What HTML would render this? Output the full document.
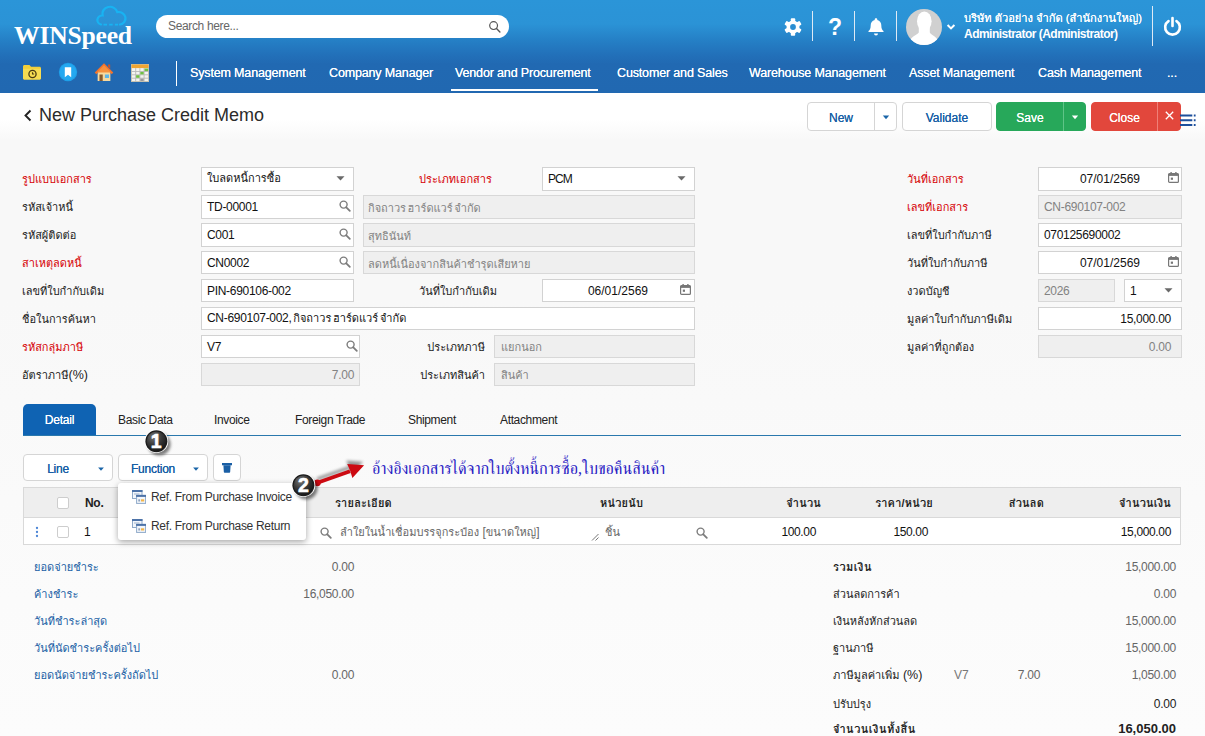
<!DOCTYPE html>
<html lang="th">
<head>
<meta charset="utf-8">
<title>New Purchase Credit Memo</title>
<style>
*{box-sizing:border-box;margin:0;padding:0}
html,body{width:1205px;height:736px;overflow:hidden;background:#fafafa}
body{background:linear-gradient(#f8f8f8 0,#f8f8f8 300px,#fbfbfb 600px,#fcfcfc 736px)}
body{font-family:"Liberation Sans","Loma","Noto Sans Thai Looped","Noto Sans Thai","Garuda","Waree","Sarabun",sans-serif;font-size:12px;color:#222;position:relative}
.abs{position:absolute}
#hdr{position:absolute;left:0;top:0;width:1205px;height:93px;background:linear-gradient(#2b95d8 0px,#2b93d6 24px,#2580c6 40px,#2270b9 55px,#2169b2 64px,#2168b1 93px)}
#logo{position:absolute;left:14px;top:18.5px;font-family:"Liberation Serif",serif;font-weight:bold;font-size:25.6px;color:#fff;letter-spacing:-0.2px;line-height:34px}
#search{position:absolute;left:156px;top:15px;width:353px;height:23px;border-radius:12px;background:#fff;color:#666;font-size:12px;line-height:23px;padding-left:12px;letter-spacing:-0.35px}
.menu{position:absolute;top:65px;color:#fff;font-size:12.5px;line-height:16px;white-space:nowrap;letter-spacing:-0.15px;text-shadow:0 0 0.4px #fff}
.vsep{position:absolute;width:1px;background:#dfeaf5}
.t{position:absolute;white-space:nowrap;line-height:16px}
.lbl{position:absolute;white-space:nowrap;line-height:16px;font-size:12px;color:#1a1a1a}
.red{color:#d60004}
.inp{position:absolute;height:24px;border:1px solid #d2d2d2;background:#fff;font-size:12px;line-height:22px;padding:0 5px;letter-spacing:-0.3px;white-space:nowrap;color:#111;overflow:hidden}
.dis{background:#efefef;color:#828282;border-color:#d8d8d8}
.r{text-align:right}
.th{font-size:11px;letter-spacing:0;word-spacing:-1.3px}
.inp.th{line-height:20px}
.inp.dis.th{line-height:24px;padding-left:4px;word-spacing:-1.5px}
.b{font-weight:bold}
.th.b{letter-spacing:0.2px}
.th.b.tot{letter-spacing:0.5px}
.tab{color:#222;letter-spacing:-0.35px;margin-top:1px}
.btn.tb{height:27px;line-height:28px;letter-spacing:-0.25px}
.dt{padding-right:41px;letter-spacing:0}
.nm{padding-right:10px}
.btn{position:absolute;height:29px;border:1px solid #d5d5d5;border-radius:4px;background:#fff;color:#1a5fa5;font-size:12px;line-height:30px;text-align:center;text-shadow:0 0 0.3px currentColor}
.blue{color:#1a5fa5}
.num{position:absolute;white-space:nowrap;line-height:16px;text-align:right;color:#666}
</style>
</head>
<body>

<div id="hdr">
  <svg class="abs" style="left:93px;top:4px" width="36" height="24" viewBox="0 0 36 26" preserveAspectRatio="none"><path d="M8 22.200A5 5 0 0 1 9.600 12.400 7.500 7.500 0 0 1 24.300 8.800 6.800 6.800 0 0 1 27 22.200" fill="none" stroke="#18b3f2" stroke-width="2.300" stroke-linecap="round"/><path d="M10.500 22.300H25" stroke="#18b3f2" stroke-width="2" stroke-dasharray="3.500 2.200"/></svg>
  <div id="logo">WINSpeed</div>
  <div id="search">Search here...</div>
  <svg class="abs" style="left:488px;top:20px" width="14" height="14" viewBox="0 0 14 14"><circle cx="5.6" cy="5.6" r="3.9" fill="none" stroke="#555" stroke-width="1.2"/><path d="M8.5 8.5l3.4 3.4" stroke="#555" stroke-width="1.4" stroke-linecap="round"/></svg>

  <!-- right icons -->
  <svg class="abs" style="left:784px;top:18px" width="18" height="18" viewBox="0 0 18 18"><g fill="#fff"><circle cx="9" cy="9" r="6.500"/><rect x="6.800" y=".300" width="4.400" height="17.400" rx=".900"/><rect x="6.800" y=".300" width="4.400" height="17.400" rx=".900" transform="rotate(60 9 9)"/><rect x="6.800" y=".300" width="4.400" height="17.400" rx=".900" transform="rotate(120 9 9)"/></g><circle cx="9" cy="9" r="2.900" fill="#2a8ed2"/></svg>
  <div class="vsep" style="left:812px;top:11px;height:30px"></div>
  <div class="abs" style="left:826px;top:13px;width:18px;text-align:center;color:#fff;font-weight:bold;font-size:23px;line-height:28px">?</div>
  <div class="vsep" style="left:854px;top:11px;height:30px"></div>
  <svg class="abs" style="left:867px;top:17px" width="18" height="20" viewBox="0 0 18 20"><path d="M9 1.2c.8 0 1.3.5 1.3 1.2v.5c2.600.7 4 2.700 4 5.300 0 3.400.9 4.800 2.200 5.900v.9H1.500v-.9C2.800 13 3.700 11.600 3.700 8.200c0-2.600 1.400-4.600 4-5.300v-.5c0-.7.500-1.200 1.300-1.200z" fill="#fff"/><path d="M7 16.400h4a2 2 0 0 1-4 0z" fill="#fff"/></svg>
  <div class="vsep" style="left:896px;top:11px;height:30px"></div>
  <svg class="abs" style="left:906px;top:9px" width="36" height="36" viewBox="0 0 36 36"><defs><clipPath id="avc"><circle cx="18" cy="18" r="18"/></clipPath></defs><circle cx="18" cy="18" r="18" fill="#d0d0d0"/><g clip-path="url(#avc)" fill="#fff"><ellipse cx="18.300" cy="12.300" rx="7.300" ry="9.800"/><path d="M12.800 18h11v5.500c1.600 2.600 5.800 3.400 7.800 7.500l1.400 7H3l1.400-7c2-4.100 6.200-4.900 8.400-7.500z"/></g></svg>
  <svg class="abs" style="left:946px;top:22.500px" width="10" height="8" viewBox="0 0 10 8"><path d="M1.600 2l3.400 3.400L8.400 2" fill="none" stroke="#fff" stroke-width="2"/></svg>
  <div class="t" style="left:964px;top:9.5px;color:#fff;font-size:11.1px;text-shadow:0 0 0.5px #fff">บริษัท ตัวอย่าง จำกัด (สำนักงานใหญ่)</div>
  <div class="t" style="left:964px;top:26px;color:#fff;font-size:12px;font-weight:bold;letter-spacing:-0.52px">Administrator (Administrator)</div>
  <div class="vsep" style="left:1152px;top:6px;height:40px"></div>
  <svg class="abs" style="left:1162px;top:16px" width="21" height="21" viewBox="0 0 20 20"><path d="M6.200 4.800a7 7 0 1 0 7.600 0" fill="none" stroke="#fff" stroke-width="2.500" stroke-linecap="round"/><path d="M10 2v7.500" stroke="#fff" stroke-width="2.500" stroke-linecap="round"/></svg>

  <!-- quick icons -->
  <svg class="abs" style="left:22px;top:63px" width="20" height="18" viewBox="0 0 20 18"><path d="M1 3.500c0-.8.600-1.500 1.500-1.500h5l1.500 1.800h8.500c.9 0 1.500.7 1.500 1.500V15c0 .9-.6 1.500-1.500 1.500h-15C1.600 16.500 1 15.900 1 15z" fill="#f3cf3a"/><path d="M1 5.800h18V15c0 .9-.6 1.500-1.500 1.500h-15C1.600 16.500 1 15.900 1 15z" fill="#f7dc52"/><circle cx="10.500" cy="11" r="3.600" fill="#f7dc52" stroke="#4a3b12" stroke-width="1.300"/><path d="M10.500 9.200V11h1.600" fill="none" stroke="#4a3b12" stroke-width="1.100"/></svg>
  <svg class="abs" style="left:58px;top:62px" width="20" height="20" viewBox="0 0 20 20"><circle cx="10" cy="10" r="9.200" fill="#1e9fe8"/><circle cx="10" cy="10" r="8.200" fill="#24a8f0"/><path d="M6.800 5.200h6.400v10l-3.200-2.400-3.200 2.400z" fill="#fff"/></svg>
  <svg class="abs" style="left:94px;top:62px" width="20" height="20" viewBox="0 0 22 20" preserveAspectRatio="none"><path d="M4 9.500h14V19H4z" fill="#f6d9a0"/><path d="M11 1.200L.8 10.600l1.700 1.600L11 4.600l8.500 7.600 1.700-1.600z" fill="#f2722b"/><path d="M11 3.200L3 10.400h16z" fill="#f7913d"/><path d="M6 12.500h3.600V19H6z" fill="#8a5a2b"/><path d="M12 12.500h4.500V16H12z" fill="#5fb6e8"/><path d="M15.500 2.500h2.300v4.200l-2.300-2z" fill="#c9552a"/></svg>
  <svg class="abs" style="left:131px;top:64px" width="18" height="18" viewBox="0 0 18 18"><rect x=".5" y=".5" width="17" height="17" fill="#f4f4f0" stroke="#c9c4b2"/><rect x=".5" y=".5" width="17" height="3.600" fill="#f0a532"/><path d="M.5 7.500h17M.5 10.800h17M.5 14.200h17M4.700 4.100v13.400M8.900 4.100v13.400M13.100 4.100v13.400" stroke="#b9b9b9" stroke-width=".9"/><rect x="9.300" y="7.900" width="3.400" height="2.500" fill="#6fbf44"/><rect x="5.100" y="11.200" width="3.400" height="2.600" fill="#6fbf44"/><rect x="13.500" y="4.500" width="3.600" height="2.600" fill="#6fbf44"/><rect x="9.300" y="14.600" width="3.400" height="2.500" fill="#9a9a9a"/></svg>
  <div class="vsep" style="left:176px;top:61px;height:25px;background:#fff"></div>

  <div class="menu" style="left:190px">System Management</div>
  <div class="menu" style="left:329px">Company Manager</div>
  <div class="menu" style="left:455px">Vendor and Procurement</div>
  <div class="menu" style="left:617px">Customer and Sales</div>
  <div class="menu" style="left:749px">Warehouse Management</div>
  <div class="menu" style="left:909px">Asset Management</div>
  <div class="menu" style="left:1038px">Cash Management</div>
  <div class="menu" style="left:1167px">...</div>
  <div class="abs" style="left:451px;top:89px;width:147px;height:2px;background:#fff"></div>
</div>

<!-- title bar -->
<div class="abs" style="left:0;top:93px;width:1205px;height:47px;background:linear-gradient(#fff 0,#fff 26px,#f8f8f8 47px)"></div>
<svg class="abs" style="left:23px;top:109px" width="10" height="13" viewBox="0 0 10 13"><path d="M7.500 1.500L2.500 6.500l5 5" fill="none" stroke="#222" stroke-width="1.900"/></svg>
<div class="t" style="left:39px;top:103px;font-size:18px;line-height:24px;color:#2b2b2b">New Purchase Credit Memo</div>

<div class="btn" style="left:807px;top:102px;width:90px"><span class="abs" style="left:0;top:0;width:66px">New</span><span class="abs" style="left:66px;top:-1px;width:1px;height:29px;background:#d5d5d5"></span><svg class="abs" style="left:74px;top:12px" width="8" height="5" viewBox="0 0 8 5"><path d="M.8.500h6.400L4 4.300z" fill="#1a65a8"/></svg></div>
<div class="btn" style="left:902px;top:102px;width:90px">Validate</div>
<div class="btn" style="left:996px;top:102px;width:90px;background:#27a85a;border-color:#27a85a;color:#fff"><span class="abs" style="left:0;top:0;width:66px">Save</span><span class="abs" style="left:66px;top:-1px;width:1px;height:29px;background:#5fc487"></span><svg class="abs" style="left:74px;top:12px" width="8" height="5" viewBox="0 0 8 5"><path d="M.8.500h6.400L4 4.300z" fill="#fff"/></svg></div>
<div class="btn" style="left:1091px;top:102px;width:90px;background:#e2473c;border-color:#e2473c;color:#fff"><span class="abs" style="left:0;top:0;width:65px">Close</span><span class="abs" style="left:65px;top:-1px;width:1px;height:29px;background:#ef8077"></span><svg class="abs" style="left:73px;top:8px" width="9" height="9" viewBox="0 0 9 9"><path d="M.800.800l7.400 7.400M8.200.800L.800 8.200" stroke="#fff" stroke-width="1.300"/></svg></div>
<svg class="abs" style="left:1180px;top:114px" width="17" height="13" viewBox="0 0 17 13"><path d="M0 1.500h12.300M0 6.300h12.300M0 11.100h12.300" stroke="#1d4f9c" stroke-width="2"/><path d="M13.800 1.500h1.800M13.800 6.300h1.800M13.800 11.100h1.800" stroke="#1d4f9c" stroke-width="2"/></svg>

<!-- form -->
<div class="lbl th red" style="left:22px;top:171px">รูปแบบเอกสาร</div>
<div class="lbl th " style="left:22px;top:199px">รหัสเจ้าหนี้</div>
<div class="lbl th " style="left:22px;top:227px">รหัสผู้ติดต่อ</div>
<div class="lbl th red" style="left:22px;top:255px">สาเหตุลดหนี้</div>
<div class="lbl th " style="left:22px;top:283px">เลขที่ใบกำกับเดิม</div>
<div class="lbl th " style="left:22px;top:311px">ชื่อในการค้นหา</div>
<div class="lbl th red" style="left:22px;top:339px">รหัสกลุ่มภาษี</div>
<div class="lbl th " style="left:22px;top:367px">อัตราภาษี<span style="font-size:12.5px">(%)</span></div>
<div class="inp  th" style="left:201px;top:167px;width:153px">ใบลดหนี้การซื้อ</div>
<svg class="abs" style="left:336px;top:176px" width="9" height="5" viewBox="0 0 9 5"><path d="M.500.300h8L4.500 4.600z" fill="#6a6a6a"/></svg>
<div class="inp " style="left:201px;top:195px;width:153px">TD-00001</div>
<svg class="abs" style="left:339px;top:200px" width="12" height="12" viewBox="0 0 12 12"><circle cx="4.600" cy="4.600" r="3.500" fill="none" stroke="#7c7c7c" stroke-width="1.400"/><path d="M7.300 7.300l3.500 3.500" stroke="#7c7c7c" stroke-width="1.800" stroke-linecap="round"/></svg>
<div class="inp " style="left:201px;top:223px;width:153px">C001</div>
<svg class="abs" style="left:339px;top:228px" width="12" height="12" viewBox="0 0 12 12"><circle cx="4.600" cy="4.600" r="3.500" fill="none" stroke="#7c7c7c" stroke-width="1.400"/><path d="M7.300 7.300l3.500 3.500" stroke="#7c7c7c" stroke-width="1.800" stroke-linecap="round"/></svg>
<div class="inp " style="left:201px;top:251px;height:23px;width:153px">CN0002</div>
<svg class="abs" style="left:339px;top:256px" width="12" height="12" viewBox="0 0 12 12"><circle cx="4.600" cy="4.600" r="3.500" fill="none" stroke="#7c7c7c" stroke-width="1.400"/><path d="M7.300 7.300l3.500 3.500" stroke="#7c7c7c" stroke-width="1.800" stroke-linecap="round"/></svg>
<div class="inp " style="left:201px;top:279px;height:23px;width:153px">PIN-690106-002</div>
<div class="inp  th" style="left:201px;top:307px;height:23px;width:494px"><span style="font-size:12px;letter-spacing:-0.3px">CN-690107-002, </span>กิจถาวร ฮาร์ดแวร์ จำกัด</div>
<div class="inp " style="left:201px;top:335px;height:23px;width:159px">V7</div>
<svg class="abs" style="left:346px;top:340px" width="12" height="12" viewBox="0 0 12 12"><circle cx="4.600" cy="4.600" r="3.500" fill="none" stroke="#7c7c7c" stroke-width="1.400"/><path d="M7.300 7.300l3.500 3.500" stroke="#7c7c7c" stroke-width="1.800" stroke-linecap="round"/></svg>
<div class="inp dis r" style="left:201px;top:363px;height:23px;width:159px">7.00</div>
<div class="inp dis th" style="left:363px;top:195px;width:332px">กิจถาวร ฮาร์ดแวร์ จำกัด</div>
<div class="inp dis th" style="left:363px;top:223px;width:332px">สุทธินันท์</div>
<div class="inp dis th" style="left:363px;top:251px;height:23px;width:332px">ลดหนี้เนื่องจากสินค้าชำรุดเสียหาย</div>
<div class="lbl th red" style="left:419px;top:171px">ประเภทเอกสาร</div>
<div class="inp " style="left:542px;top:167px;width:153px;letter-spacing:-1px">PCM</div>
<svg class="abs" style="left:677px;top:176px" width="9" height="5" viewBox="0 0 9 5"><path d="M.500.300h8L4.500 4.600z" fill="#6a6a6a"/></svg>
<div class="lbl th " style="left:419px;top:283px">วันที่ใบกำกับเดิม</div>
<div class="inp r dt" style="left:542px;top:279px;height:23px;width:153px;padding-right:46px">06/01/2569</div>
<svg class="abs" style="left:680px;top:284px" width="11" height="11" viewBox="0 0 11 11"><rect x=".600" y="1.600" width="9.800" height="8.800" rx="1" fill="none" stroke="#777" stroke-width="1.200"/><rect x=".600" y="1.600" width="9.800" height="2.300" fill="#777"/><rect x="2.400" y="0" width="1.400" height="2" fill="#777"/><rect x="7.200" y="0" width="1.400" height="2" fill="#777"/><rect x="2.800" y="5.600" width="2.200" height="2.200" fill="#777"/></svg>
<div class="lbl th " style="right:720px;top:339px">ประเภทภาษี</div>
<div class="inp dis th" style="left:494px;top:335px;height:23px;width:201px;line-height:22px;padding-left:6px">แยกนอก</div>
<div class="lbl th " style="right:720px;top:367px">ประเภทสินค้า</div>
<div class="inp dis th" style="left:494px;top:363px;height:23px;width:201px;line-height:22px;padding-left:6px">สินค้า</div>
<div class="lbl th red" style="left:907px;top:171px">วันที่เอกสาร</div>
<div class="lbl th red" style="left:907px;top:199px">เลขที่เอกสาร</div>
<div class="lbl th " style="left:907px;top:227px">เลขที่ใบกำกับภาษี</div>
<div class="lbl th " style="left:907px;top:255px">วันที่ใบกำกับภาษี</div>
<div class="lbl th " style="left:907px;top:283px">งวดบัญชี</div>
<div class="lbl th " style="left:907px;top:311px">มูลค่าใบกำกับภาษีเดิม</div>
<div class="lbl th " style="left:907px;top:339px">มูลค่าที่ถูกต้อง</div>
<div class="inp r dt" style="left:1038px;top:167px;width:144px">07/01/2569</div>
<svg class="abs" style="left:1168px;top:172px" width="11" height="11" viewBox="0 0 11 11"><rect x=".600" y="1.600" width="9.800" height="8.800" rx="1" fill="none" stroke="#777" stroke-width="1.200"/><rect x=".600" y="1.600" width="9.800" height="2.300" fill="#777"/><rect x="2.400" y="0" width="1.400" height="2" fill="#777"/><rect x="7.200" y="0" width="1.400" height="2" fill="#777"/><rect x="2.800" y="5.600" width="2.200" height="2.200" fill="#777"/></svg>
<div class="inp dis" style="left:1038px;top:195px;width:144px">CN-690107-002</div>
<div class="inp " style="left:1038px;top:223px;width:144px">070125690002</div>
<div class="inp r dt" style="left:1038px;top:251px;height:23px;width:144px">07/01/2569</div>
<svg class="abs" style="left:1168px;top:256px" width="11" height="11" viewBox="0 0 11 11"><rect x=".600" y="1.600" width="9.800" height="8.800" rx="1" fill="none" stroke="#777" stroke-width="1.200"/><rect x=".600" y="1.600" width="9.800" height="2.300" fill="#777"/><rect x="2.400" y="0" width="1.400" height="2" fill="#777"/><rect x="7.200" y="0" width="1.400" height="2" fill="#777"/><rect x="2.800" y="5.600" width="2.200" height="2.200" fill="#777"/></svg>
<div class="inp dis" style="left:1038px;top:279px;height:23px;width:77px">2026</div>
<div class="inp " style="left:1124px;top:279px;height:23px;width:58px">1</div>
<svg class="abs" style="left:1164px;top:288px" width="9" height="5" viewBox="0 0 9 5"><path d="M.500.300h8L4.500 4.600z" fill="#6a6a6a"/></svg>
<div class="inp r nm" style="left:1038px;top:307px;height:23px;width:144px">15,000.00</div>
<div class="inp dis r nm" style="left:1038px;top:335px;height:23px;width:144px">0.00</div>
<!-- lower -->
<div class="abs" style="left:23px;top:435px;width:1158px;height:1px;background:#2a78ad"></div>
<div class="abs" style="left:23px;top:404px;width:73px;height:31px;background:#0f63b3;border-radius:5px 5px 0 0;color:#fff;text-align:center;line-height:32px;font-size:12px;letter-spacing:-0.2px;text-shadow:0 0 .4px #fff">Detail</div>
<div class="t tab" style="left:118px;top:411px">Basic Data</div>
<div class="t tab" style="left:214px;top:411px">Invoice</div>
<div class="t tab" style="left:295px;top:411px">Foreign Trade</div>
<div class="t tab" style="left:408px;top:411px">Shipment</div>
<div class="t tab" style="left:500px;top:411px">Attachment</div>
<div class="btn tb" style="left:23px;top:454px;width:90px"><span class="abs" style="left:0;top:0;width:68px">Line</span><svg class="abs" style="left:73px;top:12px" width="8" height="4.500" viewBox="0 0 8 5"><path d="M.8.500h6.400L4 4.300z" fill="#1a65a8"/></svg></div>
<div class="btn tb" style="left:118px;top:454px;width:90px"><span class="abs" style="left:0;top:0;width:68px">Function</span><svg class="abs" style="left:73px;top:12px" width="8" height="4.500" viewBox="0 0 8 5"><path d="M.8.500h6.400L4 4.300z" fill="#1a65a8"/></svg></div>
<div class="btn tb" style="left:213px;top:454px;width:28px"><svg class="abs" style="left:8px;top:8px" width="10" height="10" viewBox="0 0 12 11" preserveAspectRatio="none"><path d="M0 0h12v2.500H0z" fill="#1a5fa5"/><path d="M1.700 2.500h8.600l-.5 7.500c0 .5-.4.800-.9.800H3.100c-.5 0-.9-.3-.9-.8z" fill="#1a5fa5"/></svg></div>
<div class="t" style="left:372px;top:457px;font-family:'Liberation Serif','FreeSerif','Noto Serif Thai','Norasi','Kinnari',serif;font-size:16.2px;line-height:24px;color:#2a22c4">อ้างอิงเอกสารได้จากใบตั้งหนี้การซื้อ,ใบขอคืนสินค้า</div>
<div class="abs" style="left:23px;top:487px;width:1158px;height:58px;border:1px solid #d9d9d9;background:#fff"></div>
<div class="abs" style="left:24px;top:488px;width:1156px;height:30px;background:#eeeeee;border-bottom:1px solid #d9d9d9"></div>
<div class="abs" style="left:57px;top:497px;width:12px;height:12px;border:1px solid #cdcdcd;border-radius:2px;background:#fff"></div>
<div class="abs" style="left:57px;top:526px;width:12px;height:12px;border:1px solid #cdcdcd;border-radius:2px;background:#fff"></div>
<div class="t b" style="left:85px;top:495px;letter-spacing:-0.3px">No.</div>
<div class="t b th" style="left:335px;top:495px">รายละเอียด</div>
<div class="t b th" style="left:600px;top:495px">หน่วยนับ</div>
<div class="t b th" style="right:384px;top:495px">จำนวน</div>
<div class="t b th" style="right:272px;top:495px">ราคา/หน่วย</div>
<div class="t b th" style="right:161px;top:495px">ส่วนลด</div>
<div class="t b th" style="right:34px;top:495px">จำนวนเงิน</div>
<svg class="abs" style="left:35px;top:525px" width="4" height="14" viewBox="0 0 4 14"><circle cx="2" cy="3" r="1.150" fill="#4d86d6"/><circle cx="2" cy="7" r="1.150" fill="#4d86d6"/><circle cx="2" cy="11" r="1.150" fill="#4d86d6"/></svg>
<div class="t" style="left:84px;top:524px;color:#111">1</div>
<svg class="abs" style="left:320px;top:527px" width="12" height="12" viewBox="0 0 12 12"><circle cx="4.600" cy="4.600" r="3.500" fill="none" stroke="#7c7c7c" stroke-width="1.400"/><path d="M7.300 7.300l3.500 3.500" stroke="#7c7c7c" stroke-width="1.800" stroke-linecap="round"/></svg>
<div class="t th" style="left:340px;top:524px;color:#666">ลำใยในน้ำเชื่อมบรรจุกระป๋อง<span style="font-size:12px;word-spacing:0"> [</span>ขนาดใหญ่<span style="font-size:12px">]</span></div>
<svg class="abs" style="left:591px;top:533px" width="8" height="8" viewBox="0 0 8 8"><path d="M1 7.500L7.500 1M4.500 7.500l3-3" stroke="#777" stroke-width="1"/></svg>
<div class="t th" style="left:605px;top:524px;color:#666">ชิ้น</div>
<svg class="abs" style="left:696px;top:527px" width="12" height="12" viewBox="0 0 12 12"><circle cx="4.600" cy="4.600" r="3.500" fill="none" stroke="#7c7c7c" stroke-width="1.400"/><path d="M7.300 7.300l3.500 3.500" stroke="#7c7c7c" stroke-width="1.800" stroke-linecap="round"/></svg>
<div class="t" style="right:389px;top:524px;color:#111;letter-spacing:-0.35px">100.00</div>
<div class="t" style="right:277px;top:524px;color:#111;letter-spacing:-0.35px">150.00</div>
<div class="t" style="right:34px;top:524px;color:#111;letter-spacing:-0.35px">15,000.00</div>
<div class="t th blue" style="left:34px;top:559px">ยอดจ่ายชำระ</div>
<div class="t" style="right:851px;top:559px;color:#666;letter-spacing:-0.3px">0.00</div>
<div class="t th blue" style="left:34px;top:586px">ค้างชำระ</div>
<div class="t" style="right:851px;top:586px;color:#666;letter-spacing:-0.3px">16,050.00</div>
<div class="t th blue" style="left:34px;top:613px">วันที่ชำระล่าสุด</div>
<div class="t th blue" style="left:34px;top:640px">วันที่นัดชำระครั้งต่อไป</div>
<div class="t th blue" style="left:34px;top:667px">ยอดนัดจ่ายชำระครั้งถัดไป</div>
<div class="t" style="right:851px;top:667px;color:#666;letter-spacing:-0.3px">0.00</div>
<div class="t th b tot" style="left:833px;top:559px;color:#222">รวมเงิน</div>
<div class="t" style="right:29px;top:559px;color:#666;letter-spacing:-0.3px">15,000.00</div>
<div class="t th" style="left:833px;top:586px;color:#222">ส่วนลดการค้า</div>
<div class="t" style="right:29px;top:586px;color:#666;letter-spacing:-0.3px">0.00</div>
<div class="t th" style="left:833px;top:613px;color:#222">เงินหลังหักส่วนลด</div>
<div class="t" style="right:29px;top:613px;color:#666;letter-spacing:-0.3px">15,000.00</div>
<div class="t th" style="left:833px;top:640px;color:#222">ฐานภาษี</div>
<div class="t" style="right:29px;top:640px;color:#666;letter-spacing:-0.3px">15,000.00</div>
<div class="t th" style="left:833px;top:667px;color:#222">ภาษีมูลค่าเพิ่ม<span style="font-size:12.5px;word-spacing:0"> (%)</span></div>
<div class="t" style="right:29px;top:667px;color:#666;letter-spacing:-0.3px">1,050.00</div>
<div class="t th" style="left:833px;top:696px;color:#222">ปรับปรุง</div>
<div class="t" style="right:29px;top:696px;color:#222;letter-spacing:-0.3px">0.00</div>
<div class="t th b tot" style="left:833px;top:721px;color:#222">จำนวนเงินทั้งสิ้น</div>
<div class="t b" style="right:29px;top:721px;color:#222;font-size:13px">16,050.00</div>
<div class="t" style="left:954px;top:667px;color:#777">V7</div>
<div class="t" style="right:165px;top:667px;color:#666;letter-spacing:-0.3px">7.00</div>
<div class="abs" style="left:118px;top:483px;width:188px;height:57px;background:#fff;border-radius:3px;box-shadow:0 2px 6px rgba(0,0,0,.35)"></div>
<svg class="abs" style="left:132px;top:490px" width="14" height="14" viewBox="0 0 14 14"><rect x=".500" y=".500" width="9.500" height="8" fill="#f2f6fb" stroke="#8ea9c9"/><rect x="0" y="0" width="10.500" height="2" fill="#4d73a8"/><path d="M2 4h5.500" stroke="#9fb3cc" stroke-width="1"/><rect x="4.600" y="5.400" width="9" height="8" fill="#f2f6fb" stroke="#8ea9c9"/><rect x="4.100" y="4.900" width="10" height="2" fill="#4d73a8"/><rect x="6.300" y="9.300" width="1.800" height="2.200" fill="#8fa3bd"/><rect x="9" y="9.300" width="3.200" height="2.200" fill="#f3b54a"/></svg>
<svg class="abs" style="left:132px;top:519px" width="14" height="14" viewBox="0 0 14 14"><rect x=".500" y=".500" width="9.500" height="8" fill="#f2f6fb" stroke="#8ea9c9"/><rect x="0" y="0" width="10.500" height="2" fill="#4d73a8"/><path d="M2 4h5.500" stroke="#9fb3cc" stroke-width="1"/><rect x="4.600" y="5.400" width="9" height="8" fill="#f2f6fb" stroke="#8ea9c9"/><rect x="4.100" y="4.900" width="10" height="2" fill="#4d73a8"/><rect x="6.300" y="9.300" width="1.800" height="2.200" fill="#8fa3bd"/><rect x="9" y="9.300" width="3.200" height="2.200" fill="#f3b54a"/></svg>
<div class="t" style="left:151px;top:489px;color:#333;letter-spacing:-0.3px">Ref. From Purchase Invoice</div>
<div class="t" style="left:151px;top:518px;color:#333;letter-spacing:-0.3px">Ref. From Purchase Return</div>
<svg class="abs" style="left:140px;top:425px" width="240" height="80" viewBox="0 0 240 80">
<defs><radialGradient id="cg" cx=".36" cy=".28" r=".8"><stop offset="0" stop-color="#767676"/><stop offset=".5" stop-color="#3a3a3a"/><stop offset="1" stop-color="#141414"/></radialGradient><filter id="cs" x="-40%" y="-40%" width="190%" height="190%"><feGaussianBlur stdDeviation="1.600"/></filter><filter id="as" x="-20%" y="-60%" width="140%" height="220%"><feGaussianBlur stdDeviation="1.400"/></filter></defs>
<g opacity=".4" filter="url(#as)" transform="translate(-1 -3.500)"><path d="M178.200 57.500L210 46.300" stroke="#000" stroke-width="3.300"/><path d="M224.100 40.200L207.200 39 210.200 45.800 212.400 52.900z" fill="#000"/></g>
<path d="M178.200 57.500L210 46.300" stroke="#cc0a12" stroke-width="3.800" fill="none"/>
<circle cx="177.400" cy="57.800" r="3.400" fill="#cc0a12"/>
<path d="M224.100 40.200L207.200 39 210.200 45.800 212.400 52.900z" fill="#cc0a12"/>
<circle cx="19.200" cy="19.200" r="11.300" fill="#000" opacity=".5" filter="url(#cs)"/>
<circle cx="16.400" cy="16.200" r="11.900" fill="#fff"/>
<circle cx="16.400" cy="16.200" r="11" fill="#1c1c1c"/>
<circle cx="16.400" cy="16.200" r="9.700" fill="url(#cg)"/>
<text x="16.100" y="23.200" text-anchor="middle" font-family="Liberation Sans,sans-serif" font-weight="bold" font-size="19.500" fill="#fff" stroke="#fff" stroke-width=".600">1</text>
<circle cx="166.200" cy="63.200" r="11.300" fill="#000" opacity=".5" filter="url(#cs)"/>
<circle cx="163.400" cy="60.200" r="11.900" fill="#fff"/>
<circle cx="163.400" cy="60.200" r="11" fill="#1c1c1c"/>
<circle cx="163.400" cy="60.200" r="9.700" fill="url(#cg)"/>
<text x="163.400" y="67.100" text-anchor="middle" font-family="Liberation Sans,sans-serif" font-weight="bold" font-size="19.500" fill="#fff" stroke="#fff" stroke-width=".600">2</text>
</svg>
</body>
</html>
